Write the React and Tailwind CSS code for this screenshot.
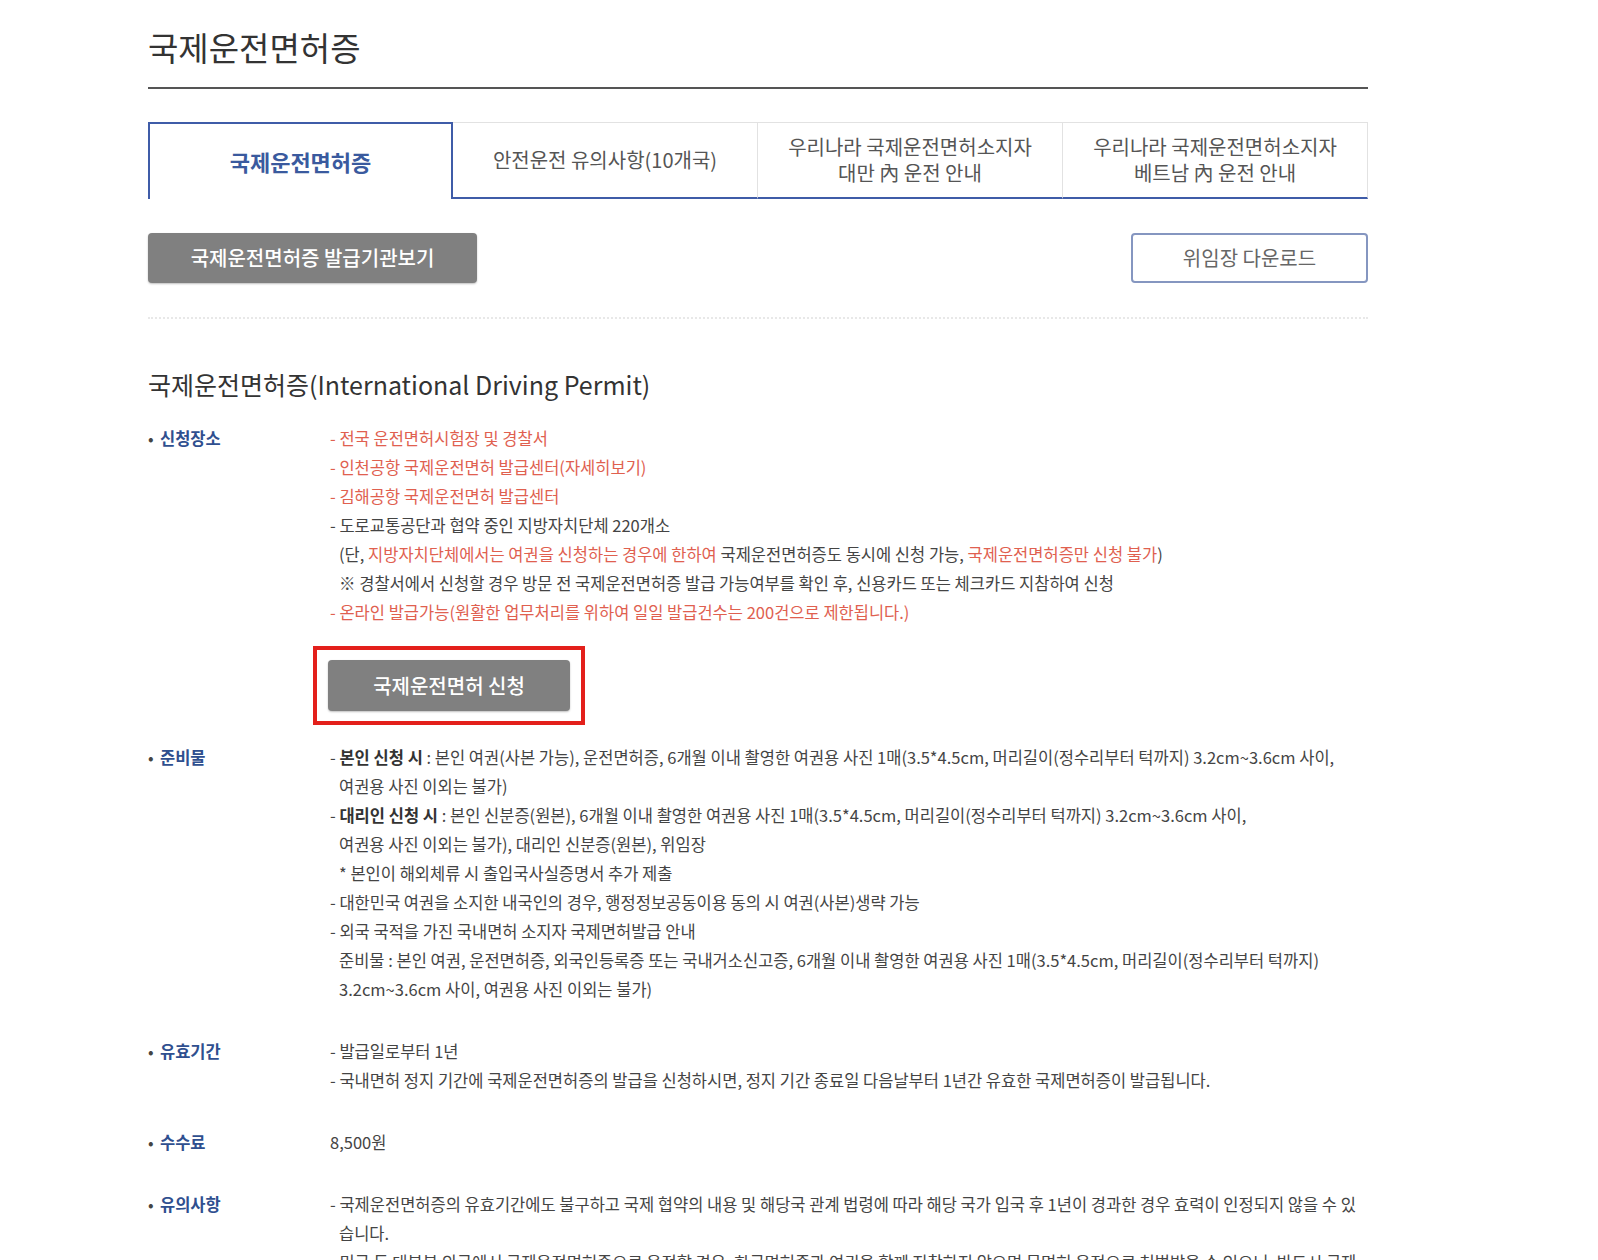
const RED = "text-[#e0604f]";

const Line = ({ indent, children, className = "" }) => (
  <div className={`whitespace-nowrap ${indent ? "pl-[9px]" : ""} ${className}`}>{children}</div>
);

const Row = ({ label, className = "", children }) => (
  <div className={`flex ${className}`}>
    <div className="w-[182px] shrink-0 flex text-[#2f4f8f] font-bold">
      <span className="w-[12px] text-[#444] font-normal">•</span>
      <span>{label}</span>
    </div>
    <div className="flex-1 min-w-0">{children}</div>
  </div>
);

const tabs = [
  ["국제운전면허증"],
  ["안전운전 유의사항(10개국)"],
  ["우리나라 국제운전면허소지자", "대만 內 운전 안내"],
  ["우리나라 국제운전면허소지자", "베트남 內 운전 안내"],
];

export default function App() {
  return (
    <div
      className="min-h-screen bg-white text-[#444]"
      style={{ fontFamily: '"Noto Sans CJK KR", "Noto Sans", sans-serif' }}
    >
      <div className="ml-[148px] w-[1220px]">
        <h1 className="pt-[27px] pb-[20px] text-[33px] leading-[40px] text-[#333] border-b-2 border-[#555]">
          국제운전면허증
        </h1>

        <div className="mt-[33px] grid grid-cols-4 h-[77px]">
          {tabs.map((t, i) =>
            i === 0 ? (
              <div
                key={i}
                className="flex items-center justify-center border-2 border-b-0 border-[#3f5ca8] text-[22px] font-bold text-[#3a5a9e]"
              >
                {t[0]}
              </div>
            ) : (
              <div
                key={i}
                className="flex flex-col items-center justify-center border-t border-r border-[#e2e2e2] border-b-2 border-b-[#3f5ca8] text-[20px] leading-[26px] text-[#555]"
              >
                {t.map((l) => (
                  <span key={l}>{l}</span>
                ))}
              </div>
            )
          )}
        </div>

        <div className="mt-[34px] flex justify-between">
          <button className="w-[329px] h-[50px] rounded-[4px] bg-[#808080] text-white text-[20px] font-medium shadow-[0_1px_2px_rgba(0,0,0,0.25)]">
            국제운전면허증 발급기관보기
          </button>
          <button className="w-[237px] h-[50px] rounded-[4px] border-2 border-[#8596c0] bg-white text-[#666] text-[20px]">
            위임장 다운로드
          </button>
        </div>

        <div className="mt-[34px] border-t-2 border-dotted border-[#e8e8e8]" />

        <h2 className="mt-[48px] text-[25px] leading-[34px] text-[#333]">
          국제운전면허증(International Driving Permit)
        </h2>

        <div className="mt-[23px] text-[16.5px] leading-[29px]">
          <Row label="신청장소">
            <Line className={RED}>- 전국 운전면허시험장 및 경찰서</Line>
            <Line className={RED}>- 인천공항 국제운전면허 발급센터(자세히보기)</Line>
            <Line className={RED}>- 김해공항 국제운전면허 발급센터</Line>
            <Line>- 도로교통공단과 협약 중인 지방자치단체 220개소</Line>
            <Line indent>
              (단, <span className={RED}>지방자치단체에서는 여권을 신청하는 경우에 한하여</span> 국제운전면허증도 동시에 신청 가능,{" "}
              <span className={RED}>국제운전면허증만 신청 불가</span>)
            </Line>
            <Line indent>
              ※ 경찰서에서 신청할 경우 방문 전 국제운전면허증 발급 가능여부를 확인 후, 신용카드 또는 체크카드 지참하여 신청
            </Line>
            <Line className={RED}>
              - 온라인 발급가능(원활한 업무처리를 위하여 일일 발급건수는 200건으로 제한됩니다.)
            </Line>
            <div className="mt-[19px] -ml-[17px] w-fit border-4 border-[#e3201b] px-[11px] py-[10px]">
              <button className="w-[242px] h-[51px] rounded-[4px] bg-[#808080] text-white text-[20px] font-medium shadow-[0_1px_2px_rgba(0,0,0,0.25)]">
                국제운전면허 신청
              </button>
            </div>
          </Row>

          <Row label="준비물" className="mt-[18px]">
            <Line>
              - <b className="text-[#333]">본인 신청 시</b> : 본인 여권(사본 가능), 운전면허증, 6개월 이내 촬영한 여권용 사진 1매(3.5*4.5cm, 머리길이(정수리부터 턱까지) 3.2cm~3.6cm 사이,
            </Line>
            <Line indent>여권용 사진 이외는 불가)</Line>
            <Line>
              - <b className="text-[#333]">대리인 신청 시</b> : 본인 신분증(원본), 6개월 이내 촬영한 여권용 사진 1매(3.5*4.5cm, 머리길이(정수리부터 턱까지) 3.2cm~3.6cm 사이,
            </Line>
            <Line indent>여권용 사진 이외는 불가), 대리인 신분증(원본), 위임장</Line>
            <Line indent>* 본인이 해외체류 시 출입국사실증명서 추가 제출</Line>
            <Line>- 대한민국 여권을 소지한 내국인의 경우, 행정정보공동이용 동의 시 여권(사본)생략 가능</Line>
            <Line>- 외국 국적을 가진 국내면허 소지자 국제면허발급 안내</Line>
            <Line indent>
              준비물 : 본인 여권, 운전면허증, 외국인등록증 또는 국내거소신고증, 6개월 이내 촬영한 여권용 사진 1매(3.5*4.5cm, 머리길이(정수리부터 턱까지)
            </Line>
            <Line indent>3.2cm~3.6cm 사이, 여권용 사진 이외는 불가)</Line>
          </Row>

          <Row label="유효기간" className="mt-[33px]">
            <Line>- 발급일로부터 1년</Line>
            <Line>
              - 국내면허 정지 기간에 국제운전면허증의 발급을 신청하시면, 정지 기간 종료일 다음날부터 1년간 유효한 국제면허증이 발급됩니다.
            </Line>
          </Row>

          <Row label="수수료" className="mt-[33px]">
            <Line>8,500원</Line>
          </Row>

          <Row label="유의사항" className="mt-[33px]">
            <Line>
              - 국제운전면허증의 유효기간에도 불구하고 국제 협약의 내용 및 해당국 관계 법령에 따라 해당 국가 입국 후 1년이 경과한 경우 효력이 인정되지 않을 수 있
            </Line>
            <Line indent>습니다.</Line>
            <Line>
              - 미국 등 대부분 외국에서 국제운전면허증으로 운전할 경우, 한국면허증과 여권을 함께 지참하지 않으면 무면허 운전으로 처벌받을 수 있으니, 반드시 국제
            </Line>
            <Line indent>운전면허증과 함께 국내 운전면허증 및 여권을 지참하시기 바랍니다.</Line>
          </Row>
        </div>
      </div>
    </div>
  );
}
